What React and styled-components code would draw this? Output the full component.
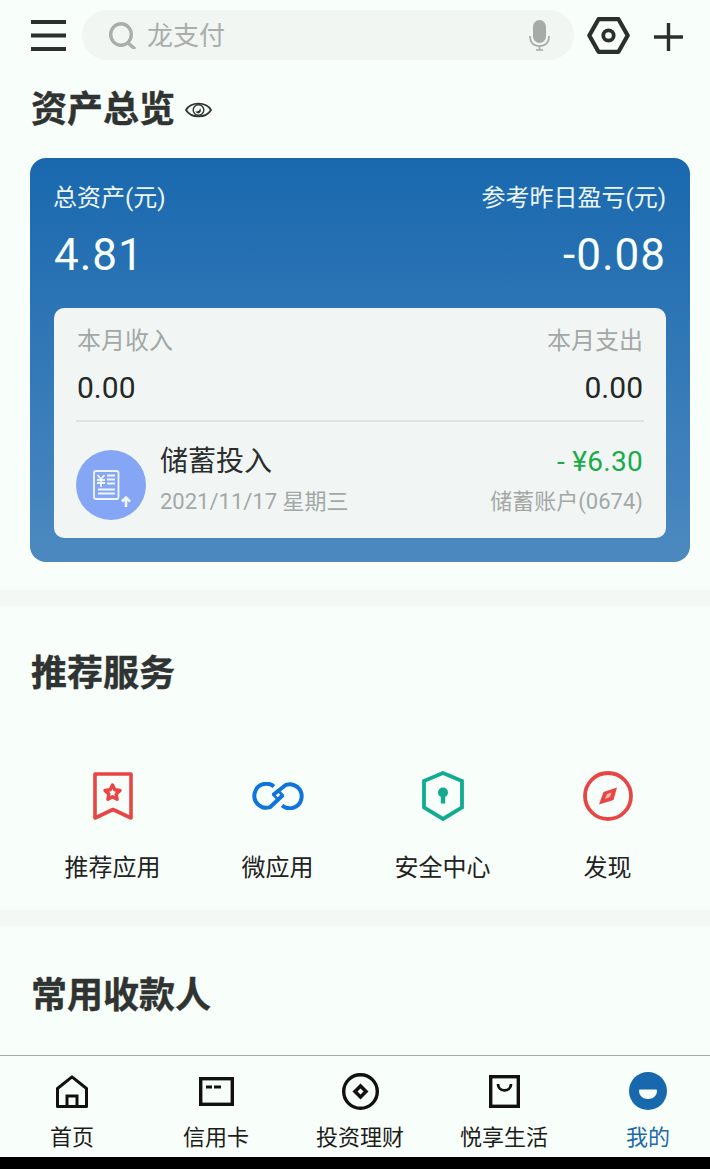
import React from "react";
import styled, { createGlobalStyle } from "styled-components";

const Global = createGlobalStyle`
  html, body { margin: 0; padding: 0; background: #000; }
  body { font-family: Roboto, "Noto Sans CJK SC", sans-serif; }
  * { box-sizing: border-box; }
`;
const Screen = styled.div`
  width: 710px; height: 1169px; display: flex; flex-direction: column;
  background: #f8fef9; overflow: hidden; color: #2b2f2d;
`;
const Scroll = styled.main`
  height: 1055px; flex: none; overflow: hidden;
`;
const TopBar = styled.header`
  height: 70px; display: flex; align-items: center; padding: 0 0 0 31px;
`;
const SearchBox = styled.div`
  width: 492px; height: 50px; margin: 0 13px 0 16px; border-radius: 25px; background: #f1f6f2;
  display: flex; align-items: center; padding: 0 24px 0 27px; color: #a9aeab; font-size: 26px;
`;
const Placeholder = styled.span` flex: 1; margin: 2px 0 0 11px; line-height: 50px; `;
const IconSlot = styled.span` display: flex; flex: none; margin-left: ${p => p.$ml || 0}px; margin-top: ${p => p.$mt || 0}px; `;
const Section = styled.section` padding: ${p => p.$pad}; height: ${p => p.$h}px; `;
const Band = styled.div` height: 16px; background: #f3f8f4; `;
const TitleRow = styled.div` display: flex; align-items: center; height: 50px; padding-left: 31px; `;
const Title = styled.h2`
  margin: 0; font-size: 36px; line-height: 50px; font-weight: 700; color: #2f3331;
  -webkit-text-stroke: 0.4px #2f3331;
`;
const AssetCard = styled.div`
  margin: 23px 20px 0 30px; height: 404px; border-radius: 16px; padding: 24px;
  background: linear-gradient(180deg, #1968ae 0%, #4c89c0 100%); color: #f8fff9;
`;
const Row = styled.div` display: flex; justify-content: space-between; align-items: center; `;
const CardLabel = styled.span` font-size: 24px; line-height: 32px; color: #edf6f5; &:first-child { margin-left: -1px; } `;
const BigNum = styled.span` font-size: 44px; line-height: 58px; margin-top: 12px; letter-spacing: 1px; `;
const Inner = styled.div`
  margin-top: 24px; height: 230px; border-radius: 10px; background: #f1f6f5; padding: 16px 23px 0 23px;
`;
const Gray = styled.span` font-size: 24px; line-height: 34px; color: #a3a8a6; `;
const Amount = styled.span` font-size: 30px; line-height: 40px; color: #232725; margin-top: 10px; `;
const Divider = styled.div` height: 2px; background: #dfe4e1; margin: 12px -1px 0 -1px; `;
const Tx = styled.div` display: flex; align-items: center; margin: 28px 0 0 -1px; `;
const TxIcon = styled.div` width: 70px; height: 70px; flex: none; display: flex; `;
const TxBody = styled.div` flex: 1; margin: -11px 0 0 14px; `;
const TxName = styled.div` font-size: 28px; line-height: 40px; color: #2a2e2c; `;
const TxRight = styled.div` text-align: right; margin-top: -11px; `;
const Price = styled.div` font-size: 28px; line-height: 40px; color: #1aab4a; letter-spacing: 0.3px; `;
const Sub = styled.div` font-size: 22px; line-height: 30px; color: #a3a8a6; margin-top: 5px; `;
const Services = styled.div` display: grid; grid-template-columns: repeat(4, 165px); margin: 67px 0 0 30px; `;
const Service = styled.div` display: flex; flex-direction: column; align-items: center; `;
const SvcIcon = styled.div` width: 60px; height: 60px; display: flex; align-items: center; justify-content: center; `;
const SvcLabel = styled.span` font-size: 24px; line-height: 34px; color: #222; margin-top: 25px; `;
const Nav = styled.nav`
  height: 102px; border-top: 1px solid #a6aaa7; display: grid; grid-template-columns: repeat(5, 144px);
  padding-top: 15px; background: #f8fef9;
`;
const NavItem = styled.div`
  display: flex; flex-direction: column; align-items: center; color: ${p => p.$active ? "#1d6aa8" : "#1c1c1c"};
`;
const NavIcon = styled.div` height: 40px; display: flex; align-items: center; `;
const NavLabel = styled.span` font-size: 22px; line-height: 30px; margin-top: 12px; `;
const BottomBar = styled.div` flex: 1; background: #000; `;

const Menu = () => <svg width="35" height="32" viewBox="0 0 35 32"><path d="M0 3h35M0 16.500h35M0 30h35" stroke="#2b2f2d" strokeWidth="4"/></svg>;
const Search = () => <svg width="27" height="27" viewBox="0 0 27 27" fill="none" stroke="#a8aeaa" strokeWidth="3.400"><ellipse cx="12" cy="12.500" rx="10.300" ry="10.800"/><path d="M19 21l6 5" strokeLinecap="round"/></svg>;
const Mic = () => <svg width="21" height="31" viewBox="0 0 21 31" fill="none"><rect x="4" y="0" width="13" height="23" rx="6.500" fill="#a6aba8"/><path d="M1 16c0 7 4 10 9.500 10S20 23 20 16M10.500 26v4M7 30h7" stroke="#a6aba8" strokeWidth="1.600"/></svg>;
const Hex = () => <svg width="43" height="37" viewBox="0 0 43 37" fill="none" stroke="#2b2f2d"><path d="M11.500 2.200h20L40.700 18.500 31.500 34.800h-20L2.300 18.500z" strokeWidth="4.200" strokeLinejoin="round"/><circle cx="21.500" cy="18.500" r="5.200" strokeWidth="3.800"/></svg>;
const Plus = () => <svg width="29" height="28" viewBox="0 0 29 28"><path d="M0 14h29M14.500 0v28" stroke="#2b2f2d" strokeWidth="3.400"/></svg>;
const Eye = () => <svg width="27" height="20" viewBox="0 0 27 20" fill="none" stroke="#2f3331" strokeWidth="1.800"><path d="M1 10C6 1.500 21 1.500 26 10 21 18.500 6 18.500 1 10z"/><circle cx="13.500" cy="10" r="5.300" strokeWidth="1.400"/><path d="M10.500 11.500c2.500.5 4.500-1 4.500-3.500 1.500 2 1 4-.5 5s-3 0-4-1.500z" fill="#2f3331" stroke="none"/></svg>;
const Ledger = () => <svg width="70" height="70" viewBox="0 0 70 70" fill="none"><circle cx="35" cy="35" r="35" fill="#85a6f4"/><g stroke="#f1f6f5" strokeWidth="1.800"><rect x="18" y="21" width="24.500" height="28" rx="2"/><path d="M21.500 25l3.500 4 3.500-4M21 30h8M21 33h8M25 29v8M31 25.500h8M31 29.500h8M31 33.500h8M22 39.500h17M22 43.500h17"/><path d="M50 57v-9M46 51.500l4-4 4 4" strokeWidth="2.600"/></g></svg>;
const Bookmark = () => <svg width="40" height="48" viewBox="0 0 40 48" fill="none" stroke="#e84545" strokeWidth="3.600" strokeLinejoin="round"><path d="M2 2h36v44L20 37.500 2 46z"/><path d="M19.500 13l2.300 4.800 5.200.7-3.800 3.600.9 5.200-4.600-2.500-4.600 2.500.9-5.200-3.800-3.600 5.200-.7z" strokeWidth="3.400"/></svg>;
const Link = () => <svg width="52" height="28" viewBox="0 0 52 28" fill="none" stroke="#0f74dc" strokeWidth="4"><path d="M22 4.500A12 12 0 1 0 18 25.200L31 13"/><path d="M30 23.500A12 12 0 1 0 34 2.800L21 13"/><path d="M26 8.500l4.500 4.500-4.500 4.500-4.500-4.500z" strokeWidth="2.600"/></svg>;
const Shield = () => <svg width="42" height="50" viewBox="0 0 42 50" fill="none"><path d="M21 2l19 8v26.500L21 48 2 36.500V10z" stroke="#12ab92" strokeWidth="3.800"/><circle cx="21" cy="21.500" r="5" fill="#12ab92"/><rect x="18.800" y="23" width="4.400" height="9.500" fill="#12ab92"/></svg>;
const Compass = () => <svg width="50" height="50" viewBox="0 0 50 50" fill="none"><circle cx="25" cy="25" r="23" stroke="#e84545" strokeWidth="3.800"/><path d="M34 16.500L30.500 29 16 33.500l4.500-12.500z" fill="#e84545"/><path d="M28.500 21.500l-1.500 4.500-5 2 2-5z" fill="#f6b5b0"/></svg>;
const Home = () => <svg width="32" height="33" viewBox="0 0 32 33" fill="none" stroke="#111" strokeWidth="3"><path d="M1.500 13.500L16 1.800l14.500 11.700v18h-29z" strokeLinejoin="round"/><path d="M11 31.500v-10.500h10v10.500"/></svg>;
const Card = () => <svg width="35" height="29" viewBox="0 0 35 29" fill="none" stroke="#111"><rect x="1.700" y="1.700" width="31.600" height="25.600" strokeWidth="3.400"/><path d="M7 10h6M15 10h7" strokeWidth="2.800"/></svg>;
const Coin = () => <svg width="37" height="37" viewBox="0 0 37 37" fill="none"><circle cx="18.500" cy="18.500" r="16.800" stroke="#111" strokeWidth="3.400"/><path d="M18.500 10.500l8 8-8 8-8-8z" fill="#111"/><path d="M18.500 15.500l3 3-3 3-3-3z" fill="#f8fef9"/></svg>;
const Bag = () => <svg width="31" height="33" viewBox="0 0 31 33" fill="none" stroke="#111"><rect x="1.700" y="1.700" width="27.600" height="29.600" strokeWidth="3.400"/><path d="M9 9c0 8.500 13 8.500 13 0" strokeWidth="2.800"/></svg>;
const Me = () => <svg width="38" height="38" viewBox="0 0 38 38"><circle cx="19" cy="19" r="19" fill="#1868ae"/><path d="M11 17.500h16a1 1 0 0 1 1 1C28 24 24 27 19 27s-9-3-9-8.500a1 1 0 0 1 1-1z" fill="#f8fef9"/></svg>;

const services = [["推荐应用", <Bookmark />], ["微应用", <Link />], ["安全中心", <Shield />], ["发现", <Compass />]];
const tabs = [["首页", <Home />], ["信用卡", <Card />], ["投资理财", <Coin />], ["悦享生活", <Bag />], ["我的", <Me />, true]];

export default function App() {
  return (
    <Screen>
      <Global />
      <Scroll>
        <TopBar>
          <Menu />
          <SearchBox>
            <Search />
            <Placeholder>龙支付</Placeholder>
            <Mic />
          </SearchBox>
          <Hex />
          <IconSlot $ml={24} $mt={4}><Plus /></IconSlot>
        </TopBar>
        <Section $pad="15px 0 0" $h={520}>
          <TitleRow>
            <Title>资产总览</Title>
            <IconSlot $ml={10}><Eye /></IconSlot>
          </TitleRow>
          <AssetCard>
            <Row>
              <CardLabel>总资产(元)</CardLabel>
              <CardLabel>参考昨日盈亏(元)</CardLabel>
            </Row>
            <Row>
              <BigNum>4.81</BigNum>
              <BigNum>-0.08</BigNum>
            </Row>
            <Inner>
              <Row><Gray>本月收入</Gray><Gray>本月支出</Gray></Row>
              <Row><Amount>0.00</Amount><Amount>0.00</Amount></Row>
              <Divider />
              <Tx>
                <TxIcon><Ledger /></TxIcon>
                <TxBody>
                  <TxName>储蓄投入</TxName>
                  <Sub>2021/11/17 星期三</Sub>
                </TxBody>
                <TxRight>
                  <Price>- ¥6.30</Price>
                  <Sub>储蓄账户(0674)</Sub>
                </TxRight>
              </Tx>
            </Inner>
          </AssetCard>
        </Section>
        <Band />
        <Section $pad="43px 0 0" $h={304}>
          <TitleRow><Title>推荐服务</Title></TitleRow>
          <Services>
            {services.map(([label, icon]) => (
              <Service key={label}>
                <SvcIcon>{icon}</SvcIcon>
                <SvcLabel>{label}</SvcLabel>
              </Service>
            ))}
          </Services>
        </Section>
        <Band />
        <Section $pad="45px 0 0" $h={129}>
          <TitleRow><Title>常用收款人</Title></TitleRow>
        </Section>
      </Scroll>
      <Nav>
        {tabs.map(([label, icon, active]) => (
          <NavItem key={label} $active={active}>
            <NavIcon>{icon}</NavIcon>
            <NavLabel>{label}</NavLabel>
          </NavItem>
        ))}
      </Nav>
      <BottomBar />
    </Screen>
  );
}
